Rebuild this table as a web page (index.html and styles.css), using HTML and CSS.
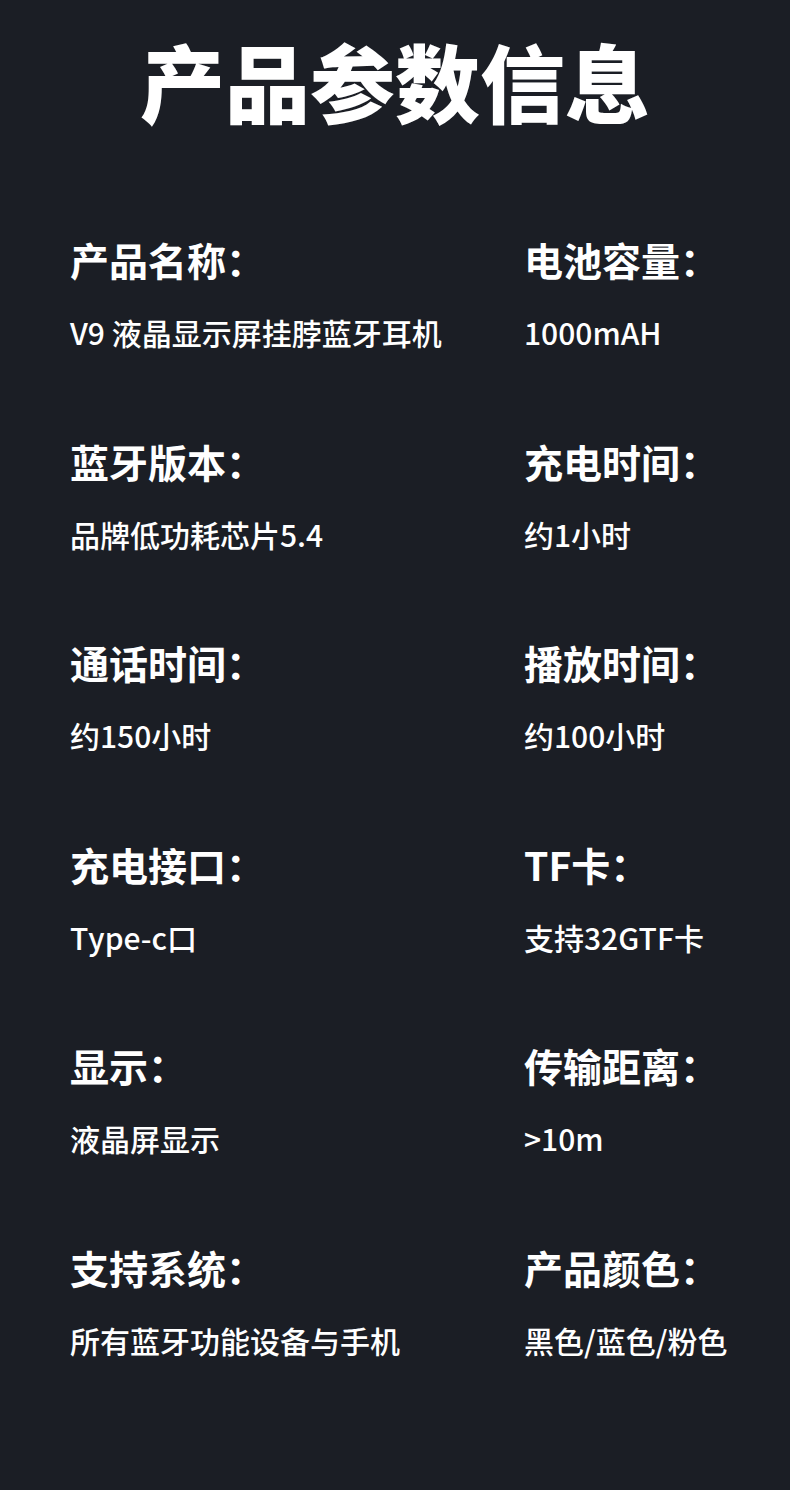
FILE: index.html
```html
<!DOCTYPE html>
<html lang="zh-CN">
<head>
<meta charset="utf-8">
<title>产品参数信息</title>
<link rel="stylesheet" href="styles.css">
</head>
<body>
<main class="page">
  <h1 class="title">产品参数信息</h1>
  <section class="specs">
    <div class="spec"><div class="label">产品名称：</div><div class="value">V9 液晶显示屏挂脖蓝牙耳机</div></div>
    <div class="spec"><div class="label">电池容量：</div><div class="value">1000mAH</div></div>
    <div class="spec"><div class="label">蓝牙版本：</div><div class="value">品牌低功耗芯片5.4</div></div>
    <div class="spec"><div class="label">充电时间：</div><div class="value">约1小时</div></div>
    <div class="spec"><div class="label">通话时间：</div><div class="value">约150小时</div></div>
    <div class="spec"><div class="label">播放时间：</div><div class="value">约100小时</div></div>
    <div class="spec"><div class="label">充电接口：</div><div class="value">Type-c口</div></div>
    <div class="spec"><div class="label">TF卡：</div><div class="value">支持32GTF卡</div></div>
    <div class="spec"><div class="label">显示：</div><div class="value">液晶屏显示</div></div>
    <div class="spec"><div class="label">传输距离：</div><div class="value">&gt;10m</div></div>
    <div class="spec"><div class="label">支持系统：</div><div class="value">所有蓝牙功能设备与手机</div></div>
    <div class="spec"><div class="label">产品颜色：</div><div class="value">黑色/蓝色/粉色</div></div>
  </section>
</main>
</body>
</html>
```

FILE: styles.css
```css
html, body {
  margin: 0;
  padding: 0;
  background: #1b1e25;
}
body {
  width: 790px;
  min-height: 1490px;
  color: #ffffff;
  font-family: "Noto Sans CJK SC", "Noto Sans", sans-serif;
}
.page {
  padding-top: 30px;
}
.title {
  margin: 0;
  font-size: 85px;
  line-height: 100px;
  font-weight: 900;
  text-align: center;
  letter-spacing: 0;
}
.specs {
  display: grid;
  grid-template-columns: 454px 1fr;
  row-gap: 83.5px;
  padding: 104px 0 0 70px;
}
.spec {
  display: flex;
  flex-direction: column;
  gap: 28px;
}
.label {
  font-size: 39px;
  line-height: 50px;
  font-weight: 700;
}
.value {
  font-size: 30px;
  line-height: 40px;
  font-weight: 500;
}
```
